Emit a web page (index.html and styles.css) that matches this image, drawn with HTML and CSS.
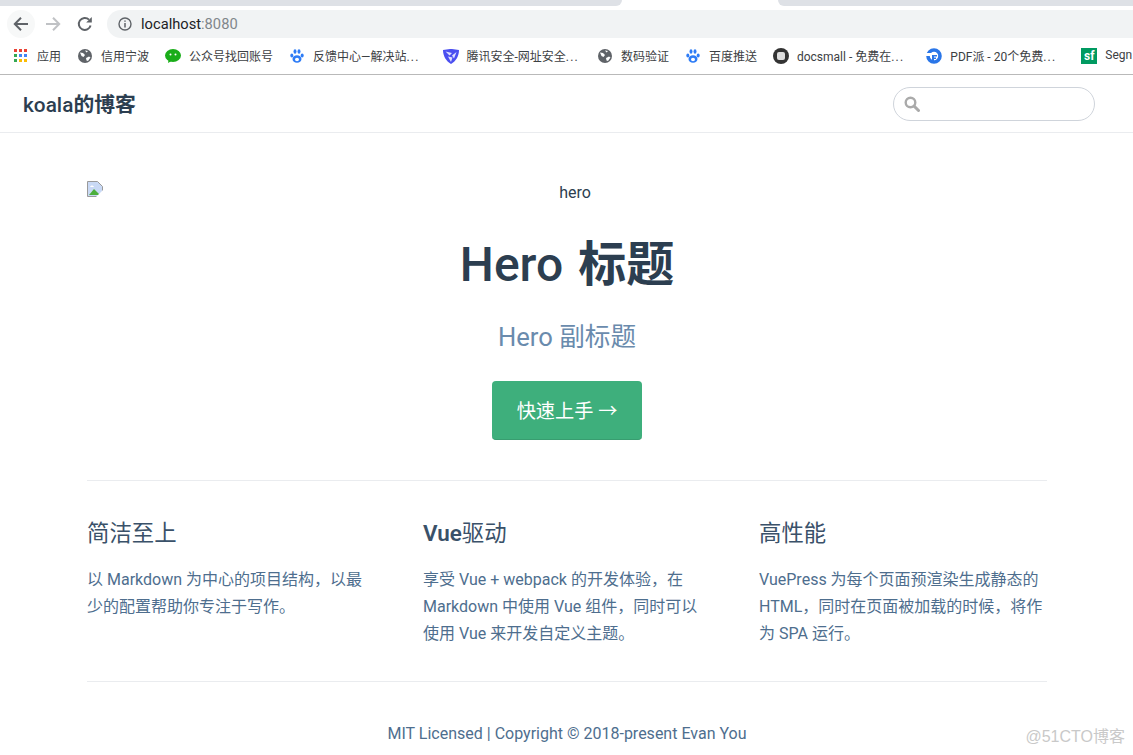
FILE: index.html
```html
<!DOCTYPE html>
<html lang="zh-CN">
<head>
	<meta charset="utf-8">
	<title>koala的博客</title>
	<link rel="stylesheet" href="styles.css">
</head>
<body>
	<div class="tabs">
		<div class="tab-gray tab-left"></div>
		<div class="tab-active"></div>
		<div class="tab-gray tab-right"></div>
	</div>
	<div class="toolbar">
		<div class="nav-btn nav-back">
			<svg width="16" height="16" viewBox="0 0 16 16"><path d="M15 8H2.500M8 1.800L1.800 8 8 14.200" fill="none" stroke="#5f6368" stroke-width="2"/></svg>
		</div>
		<div class="nav-btn">
			<svg width="16" height="16" viewBox="0 0 16 16"><path d="M1 8h12.500M8 1.800L14.200 8 8 14.200" fill="none" stroke="#c0c2c5" stroke-width="2"/></svg>
		</div>
		<div class="nav-btn">
			<svg width="16" height="16" viewBox="0 0 16 16"><path d="M13.600 9.500A6 6 0 1 1 12 3.600" fill="none" stroke="#5f6368" stroke-width="2"/><path d="M9.200 6.600h5.600V1z" fill="#5f6368"/></svg>
		</div>
		<div class="omnibox">
			<svg width="14" height="14" viewBox="0 0 14 14"><circle cx="7" cy="7" r="6" fill="none" stroke="#5f6368" stroke-width="1.400"/><path d="M7 6v4.400M7 3.400v1.400" stroke="#5f6368" stroke-width="1.500"/></svg>
			<span class="url">localhost<span class="port">:8080</span></span>
		</div>
	</div>
	<div class="bookmarks">
		<div class="bm">
			<svg width="16" height="16" viewBox="-1 -1 16 16">
				<rect x="0" y="0" width="3" height="3" fill="#ea4335"/><rect x="5" y="0" width="3" height="3" fill="#ea4335"/><rect x="10" y="0" width="3" height="3" fill="#ea4335"/>
				<rect x="0" y="5" width="3" height="3" fill="#34a853"/><rect x="5" y="5" width="3" height="3" fill="#4285f4"/><rect x="10" y="5" width="3" height="3" fill="#4285f4"/>
				<rect x="0" y="10" width="3" height="3" fill="#34a853"/><rect x="5" y="10" width="3" height="3" fill="#fbbc05"/><rect x="10" y="10" width="3" height="3" fill="#fbbc05"/>
			</svg>
			<span>应用</span>
		</div>
		<div class="bm">
			<svg width="16" height="16" viewBox="0 0 16 16"><circle cx="8" cy="8" r="7" fill="#5f6368"/><path d="M3 4.500l3 .5 2 2-1.500 2-2-1zM9 10l3-1.500 1.500 1-2.500 3.500-1.500-.5zM8 2.500l3 .5-1.500 1.500z" fill="#fff"/></svg>
			<span>信用宁波</span>
		</div>
		<div class="bm">
			<svg width="16" height="16" viewBox="0 -1 16 16"><ellipse cx="8" cy="6.500" rx="8" ry="6.500" fill="#1aad19"/><path d="M3.500 11l-.5 3 3.500-2z" fill="#1aad19"/><circle cx="5.500" cy="5.500" r="1" fill="#fff"/><circle cx="10.500" cy="5.500" r="1" fill="#fff"/></svg>
			<span>公众号找回账号</span>
		</div>
		<div class="bm bm-cut7">
			<svg width="16" height="16" viewBox="-1 -1 16 16"><ellipse cx="7" cy="10" rx="4.500" ry="3.800" fill="#2e7cf6"/><ellipse cx="1.800" cy="6.500" rx="1.500" ry="2" fill="#2e7cf6"/><ellipse cx="12.200" cy="6.500" rx="1.500" ry="2" fill="#2e7cf6"/><ellipse cx="5" cy="2.500" rx="1.500" ry="2.200" fill="#2e7cf6"/><ellipse cx="9" cy="2.500" rx="1.500" ry="2.200" fill="#2e7cf6"/><ellipse cx="7" cy="10.500" rx="2" ry="1.800" fill="#fff"/></svg>
			<span>反馈中心—解决站<span class="dots">...</span></span>
		</div>
		<div class="bm bm-cut2">
			<svg width="16" height="16" viewBox="0 0 16 16"><path d="M0 2l7-1h2l7 1c0 6-3 11-8 14C3 13 0 8 0 2z" fill="#4b4ff0"/><path d="M2.500 3.500L9 5 6.500 7.500zM13.500 4L11 10.500 9 7.500zM8 14L5 8.500l4.500 1z" fill="#dfe0ff"/></svg>
			<span>腾讯安全-网址安全<span class="dots">...</span></span>
		</div>
		<div class="bm">
			<svg width="16" height="16" viewBox="0 0 16 16"><circle cx="8" cy="8" r="7" fill="#5f6368"/><path d="M3 4.500l3 .5 2 2-1.500 2-2-1zM9 10l3-1.500 1.500 1-2.500 3.500-1.500-.5zM8 2.500l3 .5-1.500 1.500z" fill="#fff"/></svg>
			<span>数码验证</span>
		</div>
		<div class="bm">
			<svg width="16" height="16" viewBox="-1 -1 16 16"><ellipse cx="7" cy="10" rx="4.500" ry="3.800" fill="#2e7cf6"/><ellipse cx="1.800" cy="6.500" rx="1.500" ry="2" fill="#2e7cf6"/><ellipse cx="12.200" cy="6.500" rx="1.500" ry="2" fill="#2e7cf6"/><ellipse cx="5" cy="2.500" rx="1.500" ry="2.200" fill="#2e7cf6"/><ellipse cx="9" cy="2.500" rx="1.500" ry="2.200" fill="#2e7cf6"/><ellipse cx="7" cy="10.500" rx="2" ry="1.800" fill="#fff"/></svg>
			<span>百度推送</span>
		</div>
		<div class="bm bm-cut6">
			<svg width="16" height="16" viewBox="0 0 16 16"><circle cx="8" cy="8" r="8" fill="#333"/><rect x="4" y="4" width="8" height="8" rx="2" fill="#ddd"/></svg>
			<span>docsmall - 免费在<span class="dots">...</span></span>
		</div>
		<div class="bm bm-cut9">
			<svg width="16" height="16" viewBox="0 0 16 16"><circle cx="8" cy="8" r="6" fill="none" stroke="#2a76e8" stroke-width="3.600"/><path d="M0 5h7v3H0z" fill="#fff"/><path d="M6 7h5v1.500H8v1h2V11H8v2H6z" fill="#2a76e8"/></svg>
			<span>PDF派 - 20个免费<span class="dots">...</span></span>
		</div>
		<div class="bm">
			<div class="sf-logo">sf</div>
			<span>Segn</span>
		</div>
	</div>

	<header class="navbar">
		<a class="site-name" href="#">koala<b>的博客</b></a>
		<div class="search-box">
			<svg width="16" height="16" viewBox="0 0 16 16"><circle cx="6.500" cy="6.500" r="4.800" fill="none" stroke="#aaa" stroke-width="2.400"/><path d="M10 10l4.500 4.500" stroke="#aaa" stroke-width="3" stroke-linecap="round"/></svg>
		</div>
	</header>

	<main class="home">
		<div class="hero">
			<div class="hero-img">
				<svg width="16" height="16" viewBox="0 0 16 16">
					<path d="M.5.500h10l5 5v10H.5z" fill="#c9d9f5" stroke="#9a9a9a"/>
					<path d="M2 14l5-6 3 3 3 3z" fill="#4caf3c"/>
					<path d="M9 16l7-7v7z" fill="#fff"/>
					<path d="M3 6c1-2 3-2 4 0z" fill="#fff"/>
				</svg>
				<span class="alt">hero</span>
			</div>
			<h1>Hero <b>标题</b></h1>
			<p class="description">Hero 副标题</p>
			<a class="action-button" href="#">快速上手 →</a>
		</div>
		<div class="features">
			<div class="feature">
				<h2>简洁至上</h2>
				<p>以 Markdown 为中心的项目结构，以最少的配置帮助你专注于写作。</p>
			</div>
			<div class="feature">
				<h2><b>Vue</b>驱动</h2>
				<p>享受 Vue + webpack 的开发体验，在 Markdown 中使用 Vue 组件，同时可以使用 Vue 来开发自定义主题。</p>
			</div>
			<div class="feature">
				<h2>高性能</h2>
				<p>VuePress 为每个页面预渲染生成静态的 HTML，同时在页面被加载的时候，将作为 SPA 运行。</p>
			</div>
		</div>
		<div class="footer">MIT Licensed | Copyright © 2018-present Evan You</div>
	</main>
	<div class="watermark">@51CTO博客</div>
</body>
</html>
```

FILE: styles.css
```css
* {
	margin: 0;
	padding: 0;
	box-sizing: border-box;
}

html, body {
	height: 755px;
	overflow: hidden;
}

body {
	position: relative;
	background: #fff;
	color: #2c3e50;
	font-family: Roboto, "Noto Sans CJK SC", sans-serif;
	font-size: 16px;
}

a {
	text-decoration: none;
}

/* browser chrome */
.tabs {
	display: flex;
	height: 6px;
}
.tab-gray {
	background: #dee1e6;
}
.tab-left {
	width: 622px;
	border-bottom-right-radius: 6px;
}
.tab-active {
	width: 156px;
}
.tab-right {
	flex: 1;
	border-bottom-left-radius: 6px;
}

.toolbar {
	display: flex;
	align-items: center;
	height: 32px;
	padding-top: 4px;
}
.nav-btn {
	display: flex;
	justify-content: center;
	align-items: center;
	width: 28px;
	height: 28px;
	margin-left: 4px;
	border-radius: 50%;
}
.nav-back {
	margin-left: 7px;
	background: #f7f8f8;
}
.omnibox {
	flex: 1;
	display: flex;
	align-items: center;
	gap: 9px;
	height: 28px;
	margin-left: 8px;
	padding-left: 11px;
	background: #f1f3f4;
	border-radius: 14px 0 0 14px;
}
.url {
	font-size: 14.7px;
	color: #202124;
	margin-top: -1px;
}
.port {
	color: #80868b;
}

.bookmarks {
	display: flex;
	align-items: center;
	gap: 16px;
	height: 37px;
	padding-left: 13px;
	white-space: nowrap;
	overflow: hidden;
	border-bottom: 1px solid #b9b9b9;
	font-size: 12px;
	color: #3c4043;
}
.bm {
	display: flex;
	align-items: center;
	flex-shrink: 0;
	gap: 8px;
}
.bm > span {
	padding-bottom: 2px;
}
.dots {
	letter-spacing: 1.2px;
}
.bm-cut2 {
	margin-right: 2px;
}
.bm-cut6 {
	margin-right: 6px;
}
.bm-cut7 {
	margin-right: 7px;
}
.bm-cut9 {
	margin-right: 9px;
}
.sf-logo {
	width: 16px;
	height: 16px;
	background: #009a61;
	color: #fff;
	font-size: 12px;
	font-weight: 700;
	line-height: 16px;
	text-align: center;
}

/* page */
.navbar {
	display: flex;
	justify-content: space-between;
	align-items: center;
	height: 58px;
	padding: 0 38px 0 23px;
	border-bottom: 1px solid #eaecef;
}
.site-name {
	margin-bottom: 2px;
	font-size: 20.8px;
	font-weight: 500;
	color: #2c3e50;
}
.site-name b, .hero h1 b {
	font-weight: 700;
}
.search-box {
	display: flex;
	align-items: center;
	width: 202px;
	height: 34px;
	padding-left: 10px;
	border: 1px solid #cfd4db;
	border-radius: 17px;
}

.home {
	width: 960px;
	margin-left: 87px;
}
.hero {
	text-align: center;
}
.hero-img {
	display: flex;
	padding-top: 48px;
	line-height: 24px;
}
.alt {
	flex: 1;
}
.hero h1 {
	margin-top: 30px;
	font-size: 48px;
	font-weight: 500;
	line-height: 1.25;
	word-spacing: 3px;
}
.description {
	margin-top: 26px;
	font-size: 25.6px;
	line-height: 1.3;
	color: #6a8bad;
}
.action-button {
	display: inline-block;
	margin-top: 27px;
	padding: 15px 25px 11px;
	font-size: 19.2px;
	line-height: 32px;
	color: #fff;
	background: #3eaf7c;
	border-bottom: 1px solid #389d70;
	border-radius: 4px;
}

.features {
	display: flex;
	justify-content: space-between;
	margin-top: 40px;
	padding: 35px 0 24px;
	border-top: 1px solid #eaecef;
}
.feature {
	width: 288px;
}
.feature h2 {
	font-size: 22.4px;
	font-weight: 400;
	line-height: 1.6;
	color: #3a5169;
}
.feature h2 b {
	font-weight: 600;
}
.feature p {
	margin-top: 14px;
	font-size: 16px;
	line-height: 27px;
	color: #4e6e8e;
}

.footer {
	margin-top: 10px;
	padding-top: 42px;
	border-top: 1px solid #eaecef;
	text-align: center;
	color: #4e6e8e;
}

.watermark {
	position: absolute;
	right: 8px;
	bottom: 8px;
	font-family: "Liberation Sans", "Noto Sans CJK SC", sans-serif;
	font-size: 16px;
	color: #c9c9c9;
}
```
